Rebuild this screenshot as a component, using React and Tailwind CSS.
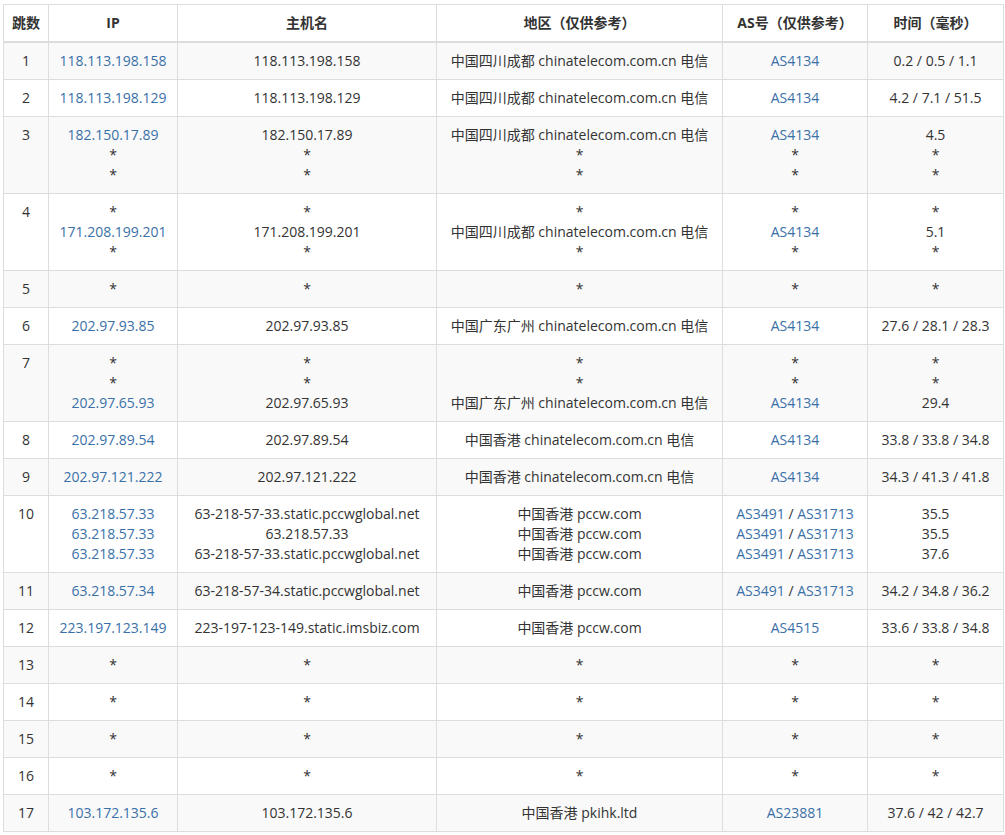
const S = '*';
const rows = [
  [['118.113.198.158'], ['118.113.198.158'], ['中国四川成都 chinatelecom.com.cn 电信'], [['AS4134']], ['0.2 / 0.5 / 1.1']],
  [['118.113.198.129'], ['118.113.198.129'], ['中国四川成都 chinatelecom.com.cn 电信'], [['AS4134']], ['4.2 / 7.1 / 51.5']],
  [['182.150.17.89', S, S], ['182.150.17.89', S, S], ['中国四川成都 chinatelecom.com.cn 电信', S, S], [['AS4134'], S, S], ['4.5', S, S]],
  [[S, '171.208.199.201', S], [S, '171.208.199.201', S], [S, '中国四川成都 chinatelecom.com.cn 电信', S], [S, ['AS4134'], S], [S, '5.1', S]],
  [[S], [S], [S], [S], [S]],
  [['202.97.93.85'], ['202.97.93.85'], ['中国广东广州 chinatelecom.com.cn 电信'], [['AS4134']], ['27.6 / 28.1 / 28.3']],
  [[S, S, '202.97.65.93'], [S, S, '202.97.65.93'], [S, S, '中国广东广州 chinatelecom.com.cn 电信'], [S, S, ['AS4134']], [S, S, '29.4']],
  [['202.97.89.54'], ['202.97.89.54'], ['中国香港 chinatelecom.com.cn 电信'], [['AS4134']], ['33.8 / 33.8 / 34.8']],
  [['202.97.121.222'], ['202.97.121.222'], ['中国香港 chinatelecom.com.cn 电信'], [['AS4134']], ['34.3 / 41.3 / 41.8']],
  [['63.218.57.33', '63.218.57.33', '63.218.57.33'], ['63-218-57-33.static.pccwglobal.net', '63.218.57.33', '63-218-57-33.static.pccwglobal.net'], ['中国香港 pccw.com', '中国香港 pccw.com', '中国香港 pccw.com'], [['AS3491', 'AS31713'], ['AS3491', 'AS31713'], ['AS3491', 'AS31713']], ['35.5', '35.5', '37.6']],
  [['63.218.57.34'], ['63-218-57-34.static.pccwglobal.net'], ['中国香港 pccw.com'], [['AS3491', 'AS31713']], ['34.2 / 34.8 / 36.2']],
  [['223.197.123.149'], ['223-197-123-149.static.imsbiz.com'], ['中国香港 pccw.com'], [['AS4515']], ['33.6 / 33.8 / 34.8']],
  [[S], [S], [S], [S], [S]],
  [[S], [S], [S], [S], [S]],
  [[S], [S], [S], [S], [S]],
  [[S], [S], [S], [S], [S]],
  [['103.172.135.6'], ['103.172.135.6'], ['中国香港 pkihk.ltd'], [['AS23881']], ['37.6 / 42 / 42.7']],
];

const link = 'text-[#3a70a8]';

const Line = ({ v, isIp }) => {
  if (v === S) return <div>*</div>;
  if (Array.isArray(v))
    return (
      <div>
        {v.map((a, i) => (
          <span key={i}>
            {i > 0 && ' / '}
            <span className={link}>{a}</span>
          </span>
        ))}
      </div>
    );
  return <div className={isIp ? link : ''}>{v}</div>;
};

export default function App() {
  const heads = ['跳数', 'IP', '主机名', '地区（仅供参考）', 'AS号（仅供参考）', '时间（毫秒）'];
  const widths = ['w-[45px]', 'w-[129px]', 'w-[259px]', 'w-[286px]', 'w-[145px]', 'w-[136px]'];
  return (
    <div className="bg-white pl-[3px] pt-[4px]" style={{ fontFamily: '"Open Sans", "Noto Sans CJK SC", sans-serif' }}>
      <table className="w-[1000px] table-fixed border-collapse text-[14px] leading-5 text-[#333]">
        <thead>
          <tr>
            {heads.map((h, i) => (
              <th key={i} className={`${widths[i]} border border-[#ddd] border-b-2 py-2 text-center font-bold`}>{h}</th>
            ))}
          </tr>
        </thead>
        <tbody>
          {rows.map((r, i) => (
            <tr key={i} className={i % 2 === 0 ? 'bg-[#f9f9f9]' : 'bg-white'}>
              <td className="border border-[#ddd] py-2 text-center align-top">{i + 1}</td>
              {r.map((cell, j) => (
                <td key={j} className="border border-[#ddd] py-2 text-center align-top whitespace-nowrap">
                  {cell.map((v, k) => <Line key={k} v={v} isIp={j === 0} />)}
                </td>
              ))}
            </tr>
          ))}
        </tbody>
      </table>
    </div>
  );
}
